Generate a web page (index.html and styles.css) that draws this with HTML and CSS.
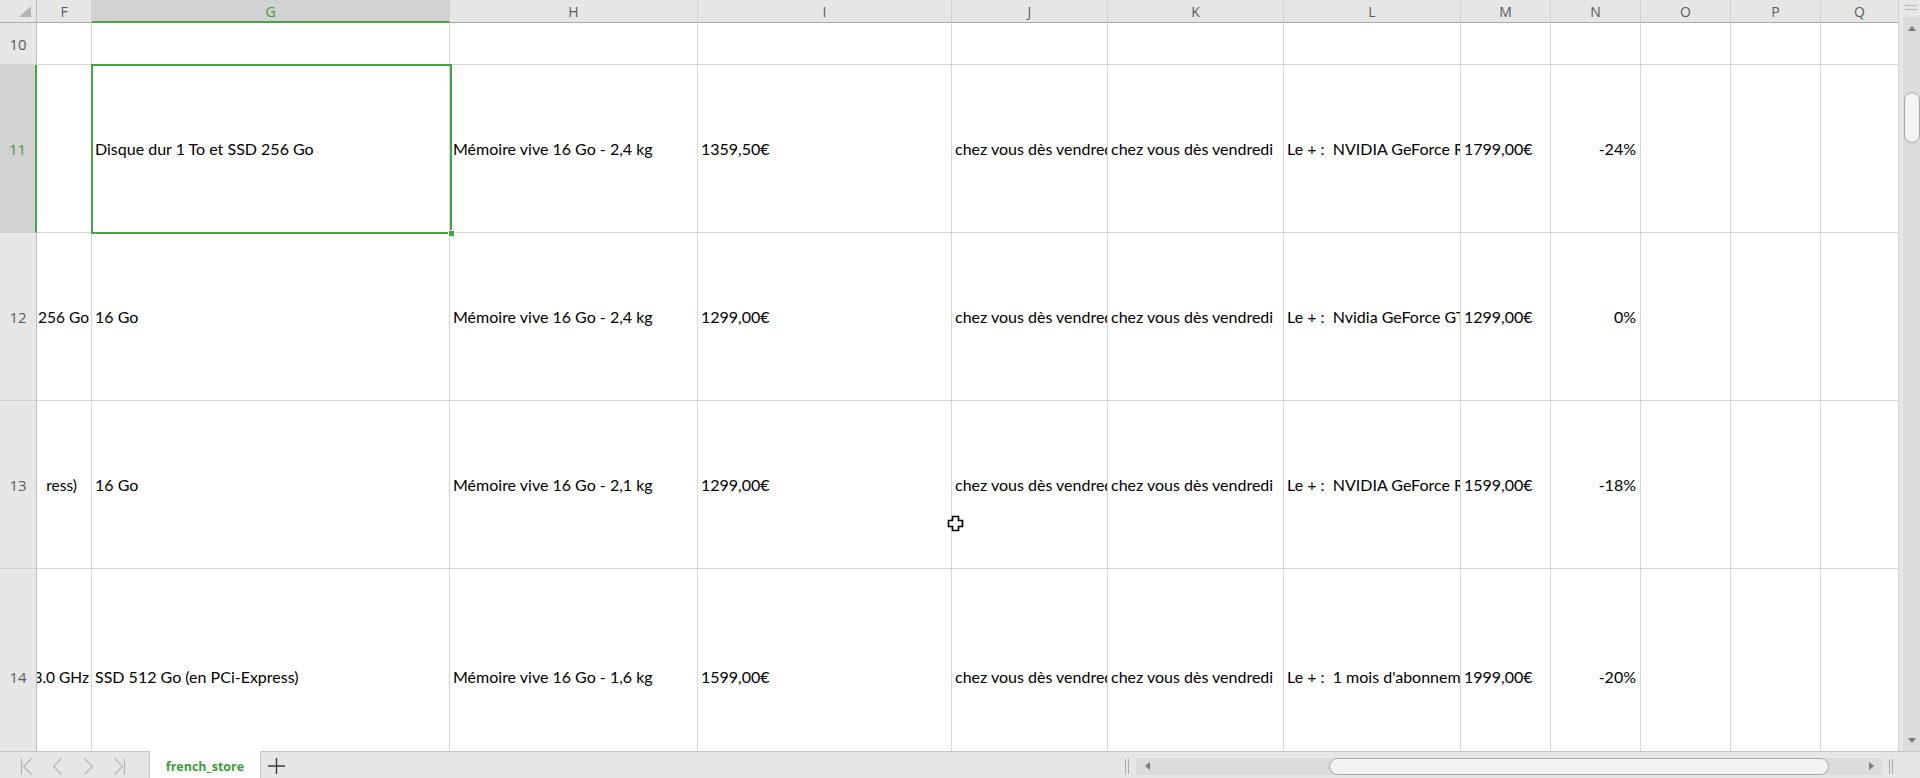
FILE: index.html
```html
<!DOCTYPE html>
<html lang="fr">
<head>
<meta charset="utf-8">
<title>french_store</title>
<link rel="stylesheet" href="styles.css">
</head>
<body>
<div class="app">
  <div class="main">
    <div class="sheet">
      <div class="ch corner"><svg width="12" height="11" viewBox="0 0 12 11"><polygon points="12,0 12,11 0,11" fill="#b5b5b5"/></svg></div>
      <div class="ch">F</div>
      <div class="ch ch-sel">G</div>
      <div class="ch">H</div>
      <div class="ch">I</div>
      <div class="ch">J</div>
      <div class="ch">K</div>
      <div class="ch">L</div>
      <div class="ch">M</div>
      <div class="ch">N</div>
      <div class="ch">O</div>
      <div class="ch">P</div>
      <div class="ch">Q</div>

      <div class="rh">10</div>
      <div class="c"></div><div class="c"></div><div class="c"></div><div class="c"></div><div class="c"></div><div class="c"></div>
      <div class="c"></div><div class="c"></div><div class="c"></div><div class="c"></div><div class="c"></div><div class="c"></div>

      <div class="rh rh-sel">11</div>
      <div class="c"></div>
      <div class="c sel">Disque dur 1 To et SSD 256 Go</div>
      <div class="c">Mémoire vive 16 Go - 2,4 kg</div>
      <div class="c">1359,50€</div>
      <div class="c">chez vous dès vendredi 20 décembre</div>
      <div class="c">chez vous dès vendredi</div>
      <div class="c">Le + :&nbsp; NVIDIA GeForce RTX 2060</div>
      <div class="c">1799,00€</div>
      <div class="c num">-24%</div>
      <div class="c"></div><div class="c"></div><div class="c"></div>

      <div class="rh">12</div>
      <div class="c cut">256 Go</div>
      <div class="c">16 Go</div>
      <div class="c">Mémoire vive 16 Go - 2,4 kg</div>
      <div class="c">1299,00€</div>
      <div class="c">chez vous dès vendredi 20 décembre</div>
      <div class="c">chez vous dès vendredi</div>
      <div class="c">Le + :&nbsp; Nvidia GeForce GTX 1660 Ti</div>
      <div class="c">1299,00€</div>
      <div class="c num">0%</div>
      <div class="c"></div><div class="c"></div><div class="c"></div>

      <div class="rh">13</div>
      <div class="c cut cut-short">ress)</div>
      <div class="c">16 Go</div>
      <div class="c">Mémoire vive 16 Go - 2,1 kg</div>
      <div class="c">1299,00€</div>
      <div class="c">chez vous dès vendredi 20 décembre</div>
      <div class="c">chez vous dès vendredi</div>
      <div class="c">Le + :&nbsp; NVIDIA GeForce RTX 2070</div>
      <div class="c">1599,00€</div>
      <div class="c num">-18%</div>
      <div class="c"></div><div class="c"></div><div class="c"></div>

      <div class="rh">14</div>
      <div class="c cut">3.0 GHz</div>
      <div class="c">SSD 512 Go (en PCi-Express)</div>
      <div class="c">Mémoire vive 16 Go - 1,6 kg</div>
      <div class="c">1599,00€</div>
      <div class="c">chez vous dès vendredi 20 décembre</div>
      <div class="c">chez vous dès vendredi</div>
      <div class="c">Le + :&nbsp; 1 mois d'abonnement offert</div>
      <div class="c">1999,00€</div>
      <div class="c num">-20%</div>
      <div class="c"></div><div class="c"></div><div class="c"></div>
    </div>

    <div class="vscroll">
      <div class="vgrip"><span class="gline"></span><span class="gline"></span></div>
      <div class="vtrack">
        <div class="arrowbox"><svg width="8" height="5" viewBox="0 0 8 5"><polygon points="4,0 8,5 0,5" fill="#7b7b7b"/></svg></div>
        <div class="vthumb"></div>
        <div class="vfill"></div>
        <div class="arrowbox"><svg width="8" height="5" viewBox="0 0 8 5"><polygon points="0,0 8,0 4,5" fill="#7b7b7b"/></svg></div>
      </div>
    </div>
  </div>

  <div class="tabbar">
    <div class="nav">
      <div class="navbtn"><svg width="13" height="17" viewBox="0 0 13 17"><path d="M1.5 0.5v16M11.5 0.5l-8 8 8 8" fill="none" stroke="#b3b3b3" stroke-width="1.2"/></svg></div>
      <div class="navbtn"><svg width="9" height="17" viewBox="0 0 9 17"><path d="M8.5 0.5l-8 8 8 8" fill="none" stroke="#b3b3b3" stroke-width="1.2"/></svg></div>
      <div class="navbtn"><svg width="9" height="17" viewBox="0 0 9 17"><path d="M0.5 0.5l8 8-8 8" fill="none" stroke="#b3b3b3" stroke-width="1.2"/></svg></div>
      <div class="navbtn"><svg width="13" height="17" viewBox="0 0 13 17"><path d="M1.5 0.5l8 8-8 8M11.5 0.5v16" fill="none" stroke="#b3b3b3" stroke-width="1.2"/></svg></div>
    </div>
    <div class="tab">french_store</div>
    <div class="addtab"><svg width="17" height="16" viewBox="0 0 17 16"><path d="M8.5 0v16M0 8h17" stroke="#3c3c3c" stroke-width="1.4"/></svg></div>
    <div class="tabspace"></div>
    <div class="hscroll">
      <div class="split"><span class="sline"></span><span class="sline"></span></div>
      <div class="htrack">
        <div class="harrow"><svg width="5" height="8" viewBox="0 0 5 8"><polygon points="0,4 5,0 5,8" fill="#7b7b7b"/></svg></div>
        <div class="hthumb"></div>
        <div class="hfill"></div>
        <div class="harrow"><svg width="5" height="8" viewBox="0 0 5 8"><polygon points="5,4 0,0 0,8" fill="#7b7b7b"/></svg></div>
      </div>
      <div class="split split-r"><span class="sline"></span><span class="sline"></span></div>
      <div class="hcorner"></div>
    </div>
  </div>

  <svg class="cursor" width="17" height="17" viewBox="0 0 17 17"><path d="M5.5 1.5h6v4h4v6h-4v4h-6v-4h-4v-6h4z" fill="#fff" stroke="#000" stroke-width="1.6"/></svg>
</div>
</body>
</html>
```

FILE: styles.css
```css
*, *::before, *::after { box-sizing: border-box; }
html, body { margin: 0; padding: 0; background: #fff; }
.app {
  position: relative;
  width: 1920px;
  height: 778px;
  overflow: hidden;
  display: flex;
  flex-direction: column;
  font-family: "Lato", "Liberation Sans", sans-serif;
}
.main {
  display: flex;
  height: 751px;
  flex: none;
}
.sheet {
  width: 1899px;
  height: 751px;
  overflow: hidden;
  display: grid;
  grid-template-columns: 37px 55px 358px 248px 254px 156px 176px 177px 90px 90px 90px 90px 78px;
  grid-template-rows: 23px 42px 168px 168px 168px 216px;
}
.ch {
  background: #e6e6e6;
  border-right: 1px solid #d2d2d2;
  border-bottom: 1px solid #ababab;
  display: flex;
  align-items: center;
  justify-content: center;
  font-family: "Open Sans", "Noto Sans", sans-serif;
  font-size: 14px;
  color: #5a5a5a;
}
.corner {
  justify-content: flex-end;
  align-items: flex-end;
  padding: 0 5px 5px 0;
  border-right: 1px solid #bdbdbd;
}
.ch-sel {
  background: #d2d2d2;
  color: #3d9c3a;
  border-bottom: 2px solid #47a445;
  padding-top: 1px;
}
.rh {
  background: #e6e6e6;
  border-right: 1px solid #bdbdbd;
  border-bottom: 1px solid #d2d2d2;
  display: flex;
  align-items: center;
  justify-content: center;
  font-family: "Open Sans", "Noto Sans", sans-serif;
  font-size: 15px;
  color: #5a5a5a;
}
.rh-sel {
  background: #d2d2d2;
  color: #3d9c3a;
  border-right: 2px solid #47a445;
}
.c {
  border-right: 1px solid #d6d6d6;
  border-bottom: 1px solid #d6d6d6;
  display: flex;
  align-items: center;
  padding-left: 3px;
  overflow: hidden;
  white-space: nowrap;
  font-family: "Lato", "Liberation Sans", sans-serif;
  font-size: 16px;
  color: #000;
}
.c.num {
  justify-content: flex-end;
  padding-right: 4px;
}
.c.cut {
  justify-content: flex-end;
  padding-left: 0;
  padding-right: 2px;
  font-size: 15.5px;
}
.c.cut-short { padding-right: 14px; }
.sel { position: relative; overflow: visible; }
.sel::before {
  content: "";
  position: absolute;
  left: -1px;
  top: -1px;
  width: 361px;
  height: 170px;
  border: 2px solid #47a445;
  pointer-events: none;
}
.sel::after {
  content: "";
  position: absolute;
  left: 356px;
  top: 165px;
  width: 7px;
  height: 7px;
  background: #47a445;
  border: 1px solid #fff;
}

/* vertical scrollbar */
.vscroll {
  width: 21px;
  height: 751px;
  background: #e6e6e6;
  display: flex;
  flex-direction: column;
}
.vgrip {
  height: 17px;
  display: flex;
  flex-direction: column;
  align-items: flex-end;
  padding: 5px 3px 0 0;
  gap: 3px;
}
.gline { display: block; width: 12px; height: 1px; background: #b4b4b4; }
.vtrack {
  flex: 1;
  margin-left: 4px;
  background: #dcdcdc;
  display: flex;
  flex-direction: column;
  align-items: center;
}
.arrowbox {
  height: 22px;
  width: 100%;
  display: flex;
  align-items: center;
  justify-content: center;
}
.vthumb {
  margin-top: 53px;
  width: 16px;
  height: 51px;
  background: #f3f3f3;
  border: 1px solid #a6a6a6;
  border-radius: 8px;
}
.vfill { flex: 1; }

/* tab bar */
.tabbar {
  height: 27px;
  flex: none;
  background: #e6e6e6;
  border-top: 1px solid #c6c6c6;
  display: flex;
  align-items: stretch;
}
.nav {
  width: 149px;
  display: flex;
  padding-left: 11px;
  align-items: center;
}
.navbtn {
  width: 31px;
  display: flex;
  justify-content: center;
  align-items: center;
  padding-top: 2px;
}
.tab {
  width: 112px;
  background: #fff;
  border-left: 1px solid #c6c6c6;
  border-right: 1px solid #c6c6c6;
  margin-top: -1px;
  display: flex;
  align-items: center;
  justify-content: center;
  padding-top: 3px;
  font-family: "Open Sans", "Noto Sans", sans-serif;
  font-weight: 700;
  font-size: 12.5px;
  color: #3d9c3a;
}
.addtab {
  width: 31px;
  display: flex;
  align-items: center;
  justify-content: center;
  padding-top: 2px;
}
.tabspace { flex: 1; }
.hscroll {
  width: 800px;
  display: flex;
  align-items: center;
}
.split {
  width: 16px;
  height: 15px;
  display: flex;
  gap: 2px;
  padding-left: 5px;
  margin-top: 2px;
}
.split-r { width: 17px; padding-left: 7px; }
.sline { width: 1px; height: 15px; background: #a8a8a8; }
.htrack {
  width: 746px;
  height: 17px;
  margin-top: 2px;
  background: #dcdcdc;
  display: flex;
  align-items: stretch;
}
.harrow {
  width: 22px;
  display: flex;
  align-items: center;
  justify-content: center;
}
.hthumb {
  margin-left: 171px;
  width: 500px;
  background: #f3f3f3;
  border: 1px solid #a6a6a6;
  border-radius: 9px;
}
.hfill { flex: 1; }
.hcorner { width: 21px; align-self: stretch; background: #e6e6e6; }

.cursor {
  position: absolute;
  left: 947px;
  top: 515px;
}
```
